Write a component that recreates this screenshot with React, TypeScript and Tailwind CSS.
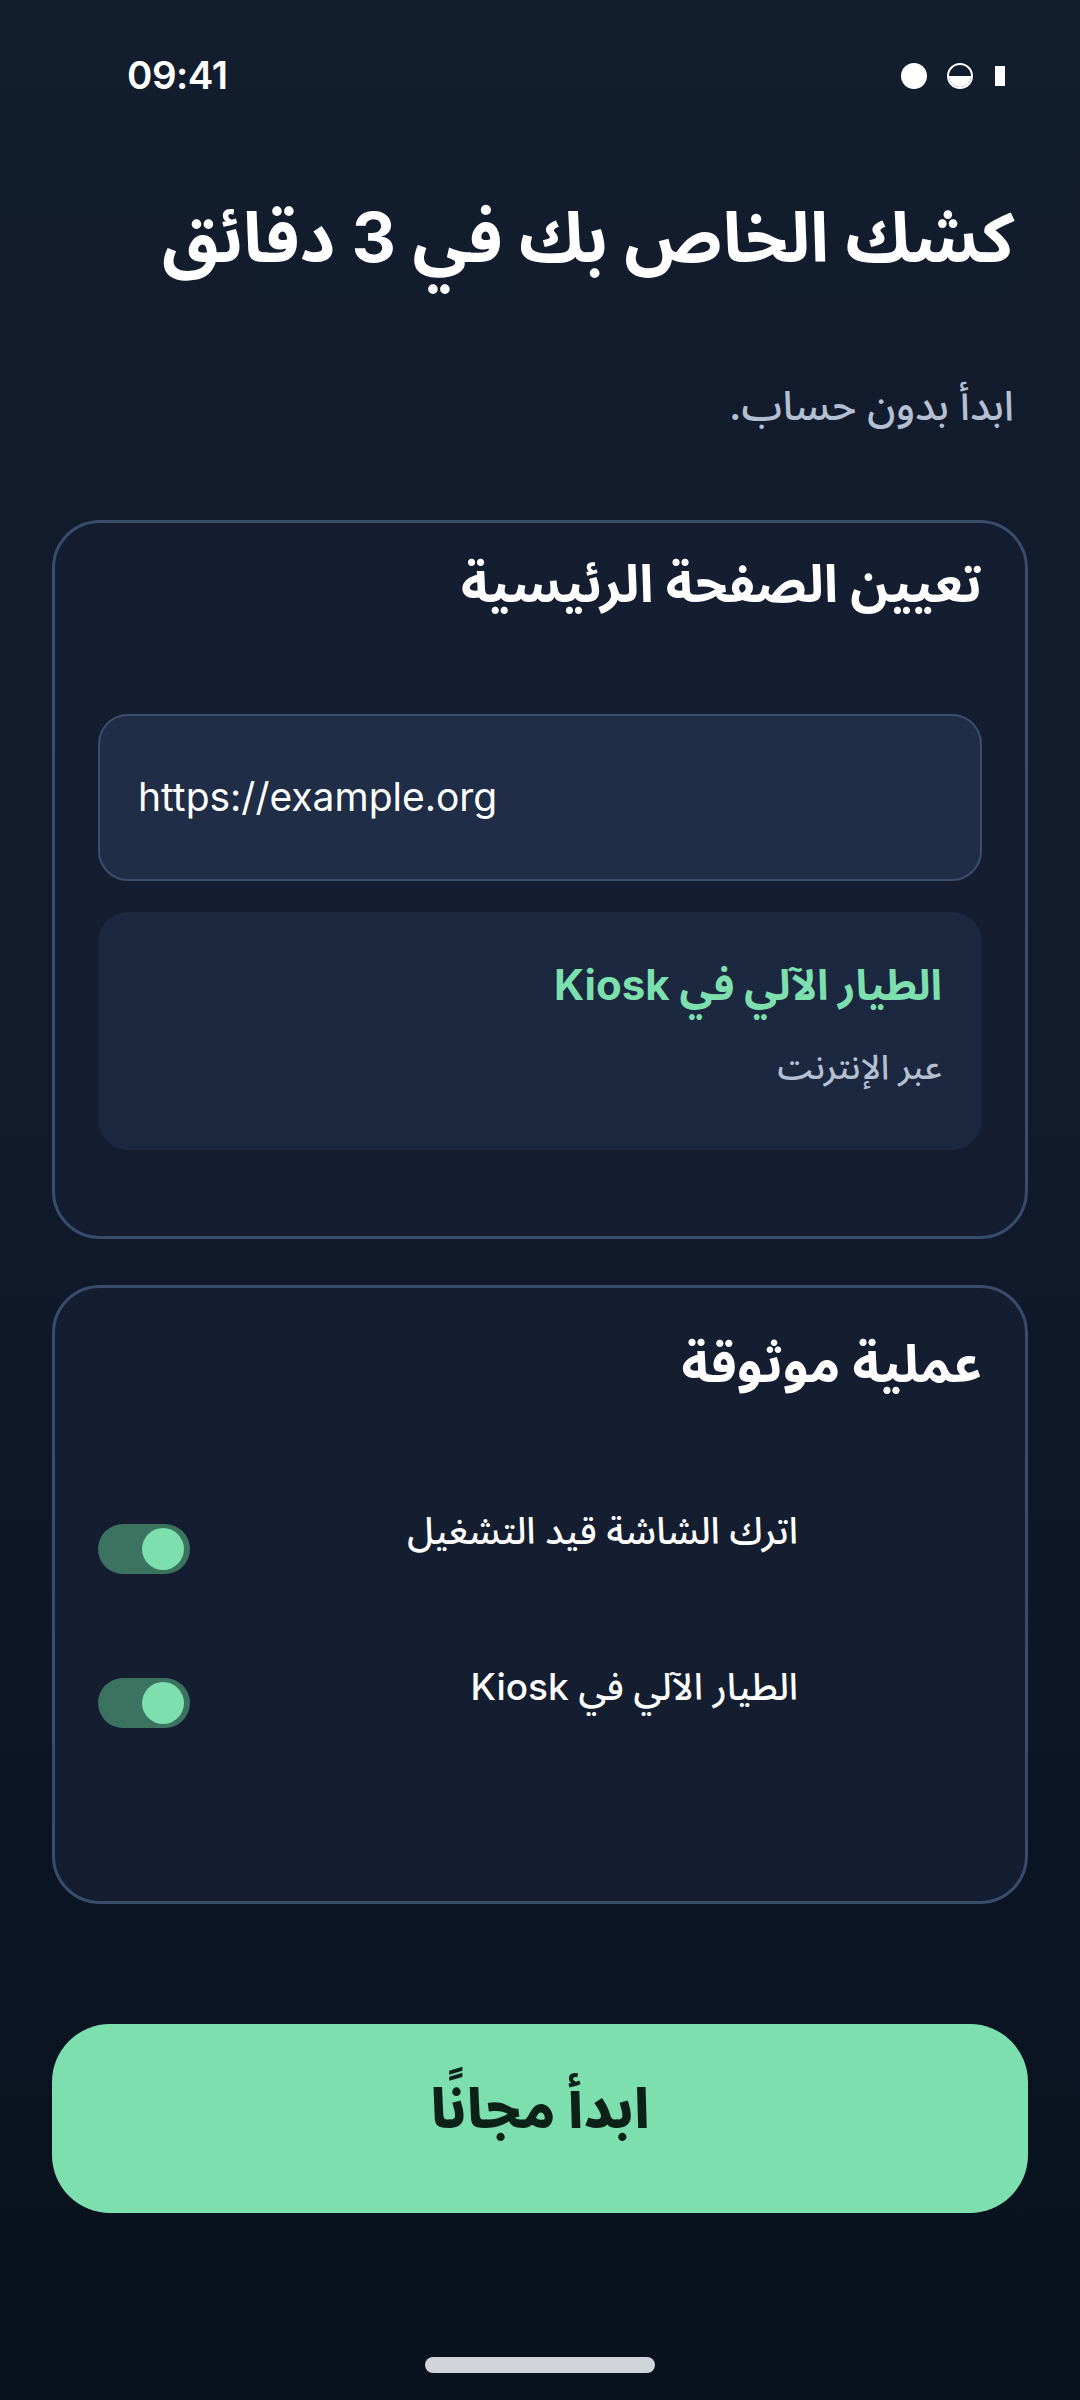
import React from "react";

const arabic = { fontFamily: "Inter, 'Noto Sans Arabic', 'DejaVu Sans', sans-serif" };

function Toggle({ className = "" }: { className?: string }) {
  return (
    <div dir="ltr" className={"w-[92px] h-[50px] rounded-full bg-[#3c7360] flex items-center justify-end pr-[6px] shrink-0 " + className}>
      <div className="w-[42px] h-[42px] rounded-full bg-[#7ddfae]" />
    </div>
  );
}

export default function App() {
  return (
    <div
      className="w-[1080px] h-[2400px] flex flex-col bg-gradient-to-b from-[#121d2e] via-[#111a2b] to-[#08111d] text-white overflow-hidden"
      style={arabic}
    >
      {/* status bar */}
      <div dir="ltr" className="h-[152px] shrink-0 flex items-center justify-between pl-[127px] pr-[75px]">
        <span className="text-[38.5px] font-semibold tracking-[-0.5px]" style={{ fontFamily: "Inter, sans-serif" }}>09:41</span>
        <div className="flex items-center gap-[20px]">
          <div className="w-[26px] h-[26px] rounded-full bg-white" />
          <div className="w-[26px] h-[26px] rounded-full border-[2px] border-white overflow-hidden flex flex-col">
            <div className="flex-1" />
            <div className="flex-1 bg-white" />
          </div>
          <div className="w-[10px] h-[20px] bg-white ml-[2px]" />
        </div>
      </div>

      {/* header */}
      <div dir="rtl" className="px-[66px] pt-[41px]">
        <h1 className="text-[69px] font-bold leading-[1.3] text-white">كشك الخاص بك في 3 دقائق</h1>
        <p className="mt-[96px] text-[41px] font-medium leading-[1.3] text-[#b4bfd1]">ابدأ بدون حساب.</p>
      </div>

      {/* card 1 */}
      <div dir="rtl" className="mx-[52px] mt-[88px] border-[3px] border-[#3a4c6b] rounded-[48px] bg-[#141e30] px-[43px] pt-[25px] pb-[86px]">
        <h2 className="text-[52px] font-bold leading-[1.4] text-white">تعيين الصفحة الرئيسية</h2>
        <div dir="ltr" className="mt-[93px] h-[167px] rounded-[30px] border-[2px] border-[#3d4e6c] bg-[#1f2d47] flex items-center pl-[38px]">
          <span className="text-[39px] text-white" style={{ fontFamily: "Inter, sans-serif" }}>https://example.org</span>
        </div>
        <div className="mt-[31px] h-[238px] rounded-[30px] bg-[#1b283f] px-[40px] pt-[46px]">
          <div className="text-[42px] font-bold leading-[1.3] text-[#7ddfae]">الطيار الآلي في Kiosk</div>
          <div className="mt-[33px] text-[34px] font-medium leading-[1.3] text-[#b4bfd1]">عبر الإنترنت</div>
        </div>
      </div>

      {/* card 2 */}
      <div dir="rtl" className="mx-[52px] mt-[46px] h-[619px] shrink-0 border-[3px] border-[#3a4c6b] rounded-[48px] bg-[#141e30] px-[43px] pt-[40px]">
        <h2 className="text-[52px] font-bold leading-[1.4] text-white">عملية موثوقة</h2>
        <div className="mt-[106px] flex items-start justify-between">
          <span className="pr-[184px] text-[37px] font-medium leading-[1.3] text-white">اترك الشاشة قيد التشغيل</span>
          <Toggle className="mt-[17px]" />
        </div>
        <div className="mt-[89px] flex items-start justify-between">
          <span className="pr-[184px] text-[37px] font-medium leading-[1.3] text-white">الطيار الآلي في Kiosk</span>
          <Toggle className="mt-[15px]" />
        </div>
      </div>

      {/* button */}
      <div dir="rtl" className="mx-[52px] mt-[120px] h-[189px] shrink-0 rounded-[58px] bg-[#7ddfae] flex items-center justify-center pb-[20px]">
        <span className="text-[55px] font-extrabold text-[#0c2118]">ابدأ مجانًا</span>
      </div>

      <div className="flex-1" />
      <div className="flex justify-center pb-[27px]">
        <div className="w-[230px] h-[16px] rounded-full bg-[#d1d5db]" />
      </div>
    </div>
  );
}
